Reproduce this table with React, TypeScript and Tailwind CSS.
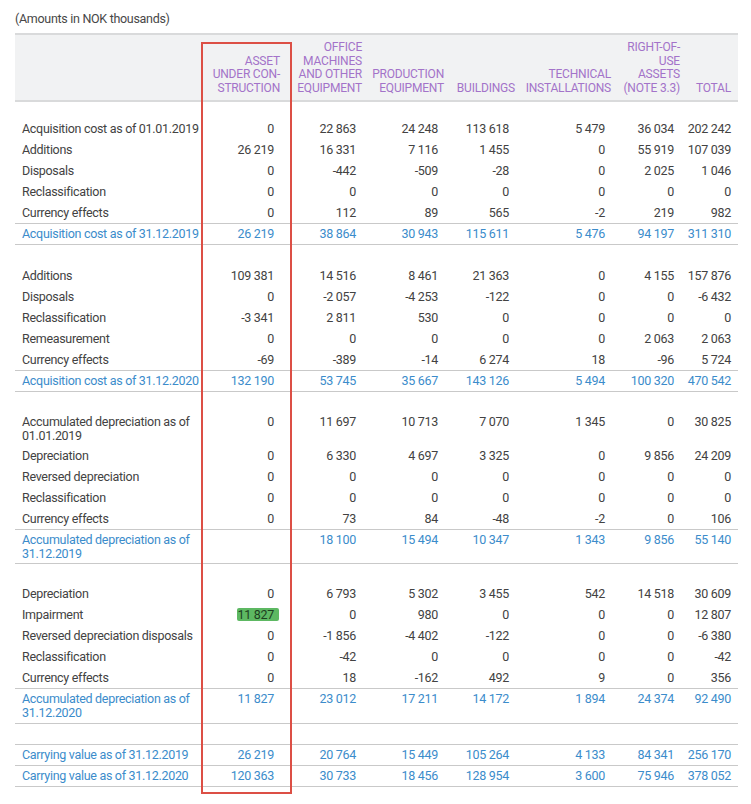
import React from "react";

const GRID =
  "grid grid-cols-[187px_85px_82px_82px_71px_96px_69px_51px]";

type Kind = "plain" | "total";

interface RowProps {
  label: string[];
  values: (string | React.ReactNode)[];
  kind?: Kind;
  pad: string;
  border?: string;
}

function Row({ label, values, kind = "plain", pad, border = "" }: RowProps) {
  const color = kind === "total" ? "text-[#3b8ccb]" : "text-[#424242]";
  return (
    <div className={`${GRID} ${border} ${color}`}>
      <div className={`${pad} pl-[7px] leading-[14px]`}>
        {label.map((l, i) => (
          <div key={i} className="whitespace-nowrap">
            {l}
          </div>
        ))}
      </div>
      {values.map((v, i) => (
        <div
          key={i}
          className={`${pad} leading-[14px] text-right whitespace-nowrap ${
            i === values.length - 1 ? "pr-[7px]" : "pr-[13px]"
          }`}
        >
          {v}
        </div>
      ))}
    </div>
  );
}

const P1 = "py-[3.5px]";
const T1 = "py-[3px]";
const P2 = "pt-[3px] pb-[2px]";
const T2a = "pt-[3px] pb-[2px]";
const T2b = "pt-[3px] pb-[3px]";
const LINE = "border-[#c9c9c9]";

const headers: string[][] = [
  ["ASSET", "UNDER CON-", "STRUCTION"],
  ["OFFICE", "MACHINES", "AND OTHER", "EQUIPMENT"],
  ["PRODUCTION", "EQUIPMENT"],
  ["BUILDINGS"],
  ["TECHNICAL", "INSTALLATIONS"],
  ["RIGHT-OF-", "USE", "ASSETS", "(NOTE 3.3)"],
  ["TOTAL"],
];

function Highlight({ children }: { children: React.ReactNode }) {
  return (
    <span className="inline-block bg-[#5db862] rounded-[2px] text-[#1d3f1f] pl-[1px] pr-[5px] -mr-[5px] leading-[13px]">
      {children}
    </span>
  );
}

export default function App() {
  return (
    <div className="relative w-[751px] h-[804px] bg-white font-['Roboto',sans-serif] text-[12.5px] tracking-[-0.3px] text-[#424242]">
      <div className="pl-[15px]">
        <div className="pt-[12px] leading-[14px] mb-[7px] text-[#474747]">
          (Amounts in NOK thousands)
        </div>
        <div className="w-[723px]">
          {/* header */}
          <div
            className={`${GRID} border-y-2 border-[#d9dadb] bg-[#f1f2f3] pt-[6px] pb-[5px] text-[12px] tracking-[-0.2px] leading-[13.5px] text-[#a373c9]`}
          >
            <div />
            {headers.map((h, i) => (
              <div
                key={i}
                className="flex flex-col justify-end items-end text-right pr-[7px] whitespace-nowrap h-[54px]"
              >
                {h.map((t, j) => (
                  <div key={j}>{t}</div>
                ))}
              </div>
            ))}
          </div>

          <div className="h-[16px]" />

          <Row pad={P1} label={["Acquisition cost as of 01.01.2019"]} values={["0", "22 863", "24 248", "113 618", "5 479", "36 034", "202 242"]} />
          <Row pad={P1} label={["Additions"]} values={["26 219", "16 331", "7 116", "1 455", "0", "55 919", "107 039"]} />
          <Row pad={P1} label={["Disposals"]} values={["0", "-442", "-509", "-28", "0", "2 025", "1 046"]} />
          <Row pad={P1} label={["Reclassification"]} values={["0", "0", "0", "0", "0", "0", "0"]} />
          <Row pad={P1} label={["Currency effects"]} values={["0", "112", "89", "565", "-2", "219", "982"]} />
          <Row pad={T1} kind="total" border={`border-y ${LINE}`} label={["Acquisition cost as of 31.12.2019"]} values={["26 219", "38 864", "30 943", "115 611", "5 476", "94 197", "311 310"]} />

          <div className="h-[20px]" />

          <Row pad={P1} label={["Additions"]} values={["109 381", "14 516", "8 461", "21 363", "0", "4 155", "157 876"]} />
          <Row pad={P1} label={["Disposals"]} values={["0", "-2 057", "-4 253", "-122", "0", "0", "-6 432"]} />
          <Row pad={P1} label={["Reclassification"]} values={["-3 341", "2 811", "530", "0", "0", "0", "0"]} />
          <Row pad={P1} label={["Remeasurement"]} values={["0", "0", "0", "0", "0", "2 063", "2 063"]} />
          <Row pad={P1} label={["Currency effects"]} values={["-69", "-389", "-14", "6 274", "18", "-96", "5 724"]} />
          <Row pad={T1} kind="total" border={`border-y ${LINE}`} label={["Acquisition cost as of 31.12.2020"]} values={["132 190", "53 745", "35 667", "143 126", "5 494", "100 320", "470 542"]} />

          <div className="h-[20px]" />

          <Row pad={P2} label={["Accumulated depreciation as of", "01.01.2019"]} values={["0", "11 697", "10 713", "7 070", "1 345", "0", "30 825"]} />
          <Row pad={P1} label={["Depreciation"]} values={["0", "6 330", "4 697", "3 325", "0", "9 856", "24 209"]} />
          <Row pad={P1} label={["Reversed depreciation"]} values={["0", "0", "0", "0", "0", "0", "0"]} />
          <Row pad={P1} label={["Reclassification"]} values={["0", "0", "0", "0", "0", "0", "0"]} />
          <Row pad={P1} label={["Currency effects"]} values={["0", "73", "84", "-48", "-2", "0", "106"]} />
          <Row pad={T2a} kind="total" border={`border-y ${LINE}`} label={["Accumulated depreciation as of", "31.12.2019"]} values={["", "18 100", "15 494", "10 347", "1 343", "9 856", "55 140"]} />

          <div className="h-[19px]" />

          <Row pad={P1} label={["Depreciation"]} values={["0", "6 793", "5 302", "3 455", "542", "14 518", "30 609"]} />
          <Row pad={P1} label={["Impairment"]} values={[<Highlight key="h">11 827</Highlight>, "0", "980", "0", "0", "0", "12 807"]} />
          <Row pad={P1} label={["Reversed depreciation disposals"]} values={["0", "-1 856", "-4 402", "-122", "0", "0", "-6 380"]} />
          <Row pad={P1} label={["Reclassification"]} values={["0", "-42", "0", "0", "0", "0", "-42"]} />
          <Row pad={P1} label={["Currency effects"]} values={["0", "18", "-162", "492", "9", "0", "356"]} />
          <Row pad={T2b} kind="total" border={`border-y ${LINE}`} label={["Accumulated depreciation as of", "31.12.2020"]} values={["11 827", "23 012", "17 211", "14 172", "1 894", "24 374", "92 490"]} />

          <div className="h-[20px]" />

          <Row pad={T1} kind="total" border={`border-y ${LINE}`} label={["Carrying value as of 31.12.2019"]} values={["26 219", "20 764", "15 449", "105 264", "4 133", "84 341", "256 170"]} />
          <Row pad={T1} kind="total" border={`border-b ${LINE}`} label={["Carrying value as of 31.12.2020"]} values={["120 363", "30 733", "18 456", "128 954", "3 600", "75 946", "378 052"]} />
        </div>
      </div>

      {/* red annotation box */}
      <div className="absolute left-[201px] top-[42px] w-[91px] h-[752px] border-2 border-[#dc4f45] pointer-events-none" />
    </div>
  );
}
